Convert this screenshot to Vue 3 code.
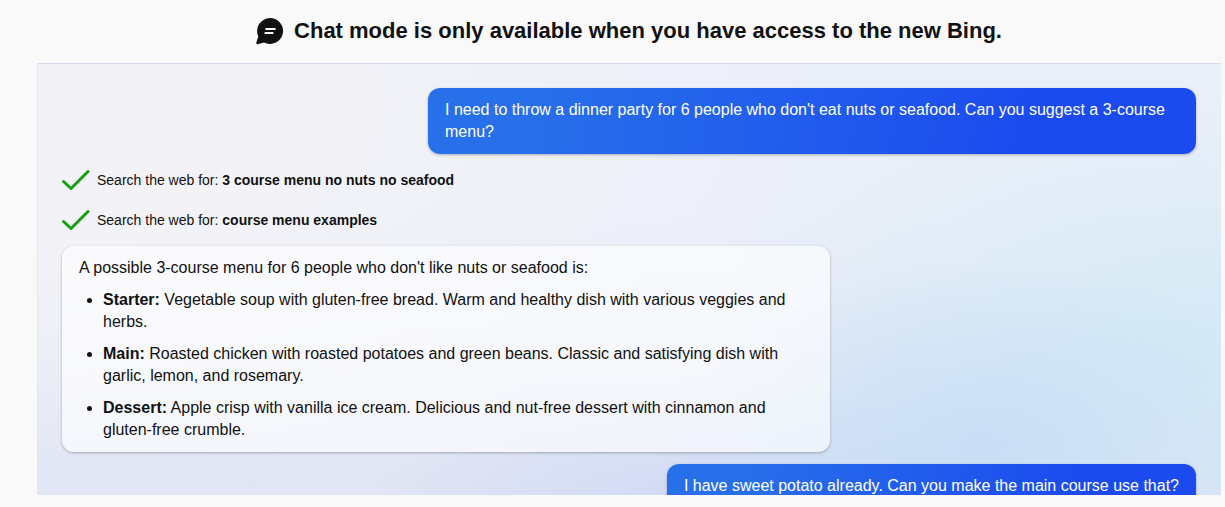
<script setup>
const question = "I need to throw a dinner party for 6 people who don't eat nuts or seafood. Can you suggest a 3-course menu?"
const searches = ['3 course menu no nuts no seafood', 'course menu examples']
const courses = [
  { name: 'Starter:', text: 'Vegetable soup with gluten-free bread. Warm and healthy dish with various veggies and herbs.' },
  { name: 'Main:', text: 'Roasted chicken with roasted potatoes and green beans. Classic and satisfying dish with garlic, lemon, and rosemary.' },
  { name: 'Dessert:', text: 'Apple crisp with vanilla ice cream. Delicious and nut-free dessert with cinnamon and gluten-free crumble.' }
]
</script>

<template>
  <main class="page">
    <header class="head">
      <svg class="logo" viewBox="0 0 28 28" aria-hidden="true">
        <path d="M14 1a13 13 0 1 1-6 24.500L1.800 27.200A1.400 1.400 0 0 1 .3 25.600L2.300 19.500A13 13 0 0 1 14 1Z" fill="#111" />
        <path d="M10.200 12h8.600M9.400 16h7.200" stroke="#fff" stroke-width="2" stroke-linecap="round" />
      </svg>
      <h1>Chat mode is only available when you have access to the new Bing.</h1>
    </header>
    <section class="panel" aria-label="Conversation">
      <p class="bubble user">{{ question }}</p>
      <ul class="searches">
        <li v-for="s in searches" :key="s">
          <svg class="check" viewBox="0 0 28 22" aria-hidden="true">
            <path d="M1.500 12.500 9 19.500 26 2.500" fill="none" stroke="#13a10e" stroke-width="3" stroke-linecap="round" stroke-linejoin="round" />
          </svg>
          <span>Search the web for: <strong>{{ s }}</strong></span>
        </li>
      </ul>
      <article class="bubble answer">
        <p>A possible 3-course menu for 6 people who don't like nuts or seafood is:</p>
        <ul>
          <li v-for="c in courses" :key="c.name"><strong>{{ c.name }}</strong> {{ c.text }}</li>
        </ul>
      </article>
      <p class="bubble user">I have sweet potato already. Can you make the main course use that?</p>
    </section>
  </main>
</template>

<style>
body {
  background: #f9f9f9;
}
</style>

<style scoped>
.page {
  box-sizing: border-box;
  display: flex;
  flex-direction: column;
  height: 100vh;
  padding: 0 4px 12px 37px;
  font: 16px/22px "Liberation Sans", Arial, sans-serif;
  color: #111;
}
.head {
  display: flex;
  align-items: center;
  justify-content: center;
  gap: 10px;
  flex: none;
  padding: 16px 0 17px;
}
.logo {
  width: 28px;
  height: 28px;
}
h1 {
  margin: 0;
  font-size: 22px;
  line-height: 30px;
  font-weight: 700;
}
.panel {
  display: flex;
  flex-direction: column;
  flex: 1;
  min-height: 0;
  box-sizing: border-box;
  overflow: hidden;
  padding: 24px 25px 0 24px;
  border: solid #d5def1;
  border-width: 1px 0 0 1px;
  border-left-color: #e0e8f5;
  background:
    radial-gradient(ellipse 28% 42% at 80% 88%, rgba(196, 220, 246, 0.800), rgba(196, 220, 246, 0)),
    radial-gradient(ellipse 42% 62% at 98% 66%, rgba(211, 234, 245, 0.950), rgba(211, 234, 245, 0)),
    radial-gradient(ellipse 30% 32% at 58% 104%, rgba(203, 215, 245, 0.850), rgba(203, 215, 245, 0)),
    radial-gradient(ellipse 65% 85% at 0% 10%, rgba(243, 243, 247, 1) 30%, rgba(241, 242, 247, 0)),
    linear-gradient(180deg, #ebeff9 35%, #e1e5f4);
}
.bubble {
  box-sizing: border-box;
  flex: none;
  max-width: 768px;
  margin: 0;
  padding: 11px 17px;
  border-radius: 12px;
  box-shadow: 0 1px 3px rgba(0, 0, 0, 0.280);
}
.user {
  align-self: flex-end;
  color: #fff;
  background: linear-gradient(100deg, #2870ea 12%, #1b4aef 80%);
}
.answer {
  width: 100%;
  margin-bottom: 12px;
  background: rgba(255, 255, 255, 0.640);
}
.answer p {
  margin: 0;
}
.answer ul {
  margin: 0;
  padding-left: 24px;
}
.answer li {
  margin-top: 10px;
}
.searches {
  flex: none;
  margin: 6px 0;
  padding: 0;
  list-style: none;
  font-size: 14px;
  line-height: 20px;
}
.searches li {
  display: flex;
  align-items: center;
  gap: 7px;
  height: 40px;
}
.check {
  width: 28px;
  height: 22px;
}
</style>
